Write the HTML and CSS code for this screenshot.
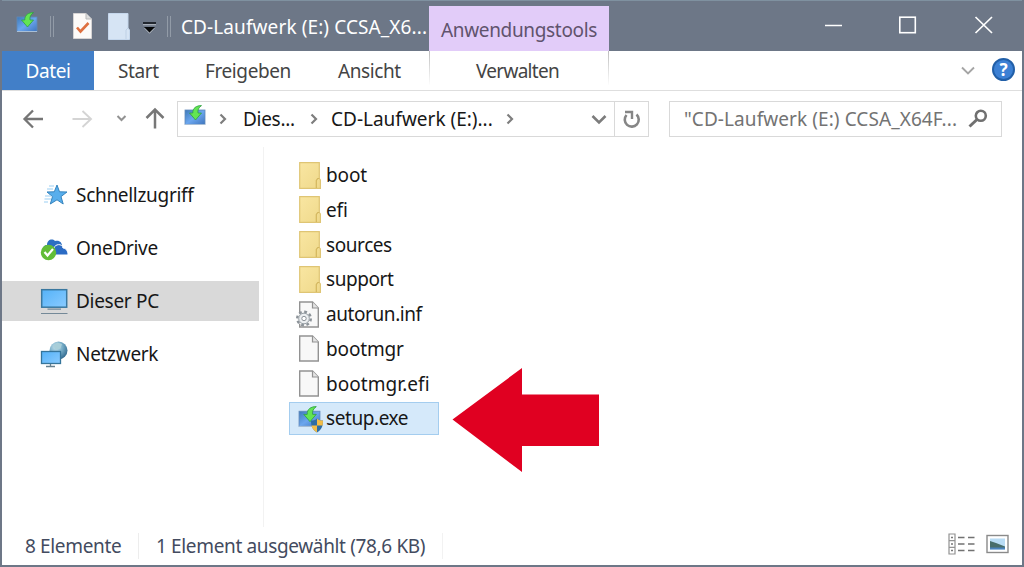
FILE: index.html
```html
<!DOCTYPE html>
<html lang="de">
<head>
  <meta charset="UTF-8">
  <title>CD-Laufwerk (E:)</title>
  <link rel="stylesheet" href="styles.css">
</head>
<body>
  <svg class="defs" width="0" height="0">
    <defs>
      <linearGradient id="blue" x1="0" y1="0" x2="1" y2="1">
        <stop offset="0" stop-color="#3d79b8"/>
        <stop offset="0.5" stop-color="#6ba6ee"/>
        <stop offset="1" stop-color="#3f75bd"/>
      </linearGradient>
      <linearGradient id="screen" x1="0" y1="0" x2="1" y2="1">
        <stop offset="0" stop-color="#54b2f8"/>
        <stop offset="1" stop-color="#8acbff"/>
      </linearGradient>
      <linearGradient id="fold" x1="0" y1="0" x2="1" y2="1">
        <stop offset="0" stop-color="#f9e6a2"/>
        <stop offset="1" stop-color="#efd98b"/>
      </linearGradient>
      <radialGradient id="globe" cx="0.35" cy="0.3" r="0.8">
        <stop offset="0" stop-color="#c6e3ee"/>
        <stop offset="0.5" stop-color="#72a9c5"/>
        <stop offset="1" stop-color="#275f86"/>
      </radialGradient>
      <symbol id="installer" viewBox="0 0 22 22">
        <rect x="1" y="5" width="20" height="14.5" fill="url(#blue)" stroke="#6089ba" stroke-width="0.8"/>
        <path d="M1 19.5H21" stroke="#a9bfd6" stroke-width="1"/>
        <path d="M17.5 0.6C12.5 0.5 8.500 3 8.800 8H5.500L11.5 15L17.500 8H14C13.5 5 14.5 2.8 17.5 0.6Z" fill="#63e552" stroke="#2f9e45" stroke-width="0.8"/>
      </symbol>
      <symbol id="folder" viewBox="0 0 22 27">
        <path d="M0.7 0.7H20.3V16.5L21.4 18V26.3H0.7Z" fill="url(#fold)" stroke="#dfc574" stroke-width="1.2"/>
        <path d="M17.3 26V18.5L18.8 16.5H20.3" fill="none" stroke="#d3b65e" stroke-width="1.2"/>
      </symbol>
      <symbol id="page" viewBox="0 0 22 27">
        <path d="M0.700 1H13.500L19.300 7V26H0.700Z" fill="#f8f8f8" stroke="#929292" stroke-width="1.4"/>
        <path d="M13.500 1V7H19.300" fill="#e4e4e4" stroke="#929292" stroke-width="1.2"/>
      </symbol>
    </defs>
  </svg>

  <div class="window">
    <div class="titlebar">
      <svg class="app-icon" width="22" height="22"><use href="#installer"/></svg>
      <span class="grip"></span>
      <svg class="props" width="19" height="26" viewBox="0 0 19 26">
        <path d="M0.5 0.5H13L18.5 6V25.5H0.5Z" fill="#fcfaf8" stroke="#d5d3d3"/>
        <path d="M13 0.5V6H18.5" fill="#ddd" stroke="#b9b9b9"/>
        <path d="M4 14.5L7.5 18.5L15.5 10" fill="none" stroke="#de7040" stroke-width="2.6"/>
      </svg>
      <svg class="newfolder" width="23" height="27" viewBox="0 0 23 27">
        <path d="M0.5 0.5H20V15L21.5 17V26.5H0.5Z" fill="#d6e4f4" stroke="#c5d7ec"/>
        <path d="M18 26V17L20 15" fill="none" stroke="#bed0e5"/>
      </svg>
      <svg class="more" width="13" height="12" viewBox="0 0 13 12">
        <path d="M0 1H13" stroke="#10141a" stroke-width="1.6"/>
        <path d="M0 2.7H13" stroke="#b7bdc5" stroke-width="1"/>
        <path d="M1 5H12L6.5 10.6Z" fill="#050607"/>
        <path d="M1.5 6.2L6.5 11.3L11.5 6.2" fill="none" stroke="#c6cad0" stroke-width="0.7"/>
      </svg>
      <span class="grip"></span>
      <span class="title">CD-Laufwerk (E:) CCSA_X6...</span>
      <span class="context">Anwendungstools</span>
      <svg class="controls" width="170" height="20" viewBox="0 0 170 20">
        <path d="M1 10.5H18" stroke="#fff" stroke-width="1.5"/>
        <rect x="75.8" y="2.2" width="15.5" height="15.5" fill="none" stroke="#fff" stroke-width="1.6"/>
        <path d="M151.5 2L168 18M168 2L151.5 18" stroke="#fff" stroke-width="1.7"/>
      </svg>
    </div>

    <div class="ribbon">
      <span class="tab file">Datei</span>
      <span class="tab start">Start</span>
      <span class="tab share">Freigeben</span>
      <span class="tab view">Ansicht</span>
      <span class="tab manage">Verwalten</span>
      <svg class="expand" width="14" height="9" viewBox="0 0 14 9"><path d="M1 1.5L7 7.5L13 1.5" fill="none" stroke="#a5a5a5" stroke-width="1.9"/></svg>
      <span class="help">?</span>
    </div>

    <div class="navbar">
      <svg class="arrows" width="145" height="24" viewBox="0 0 145 24">
        <path d="M21 12H2.5M11 3.5L2.5 12L11 20.5" fill="none" stroke="#757575" stroke-width="2.3"/>
        <path d="M50.5 12H69M60.5 4L69 12L60.5 20" fill="none" stroke="#d4d4d4" stroke-width="1.9"/>
        <path d="M95.5 9L99.500 13L103.500 9" fill="none" stroke="#929292" stroke-width="2"/>
        <path d="M133 21.5V3M124.5 11L133 2.5L141.5 11" fill="none" stroke="#777" stroke-width="2.5"/>
      </svg>
      <div class="address">
        <svg class="drive" width="22" height="22"><use href="#installer"/></svg>
        <svg class="chev c1" width="8" height="12" viewBox="0 0 8 12"><path d="M1.5 1.5L6 6L1.5 10.5" fill="none" stroke="#7e7e7e" stroke-width="2.2"/></svg>
        <span class="crumb pc">Dies...</span>
        <svg class="chev" width="8" height="12" viewBox="0 0 8 12"><path d="M1.5 1.5L6 6L1.5 10.5" fill="none" stroke="#7e7e7e" stroke-width="2.2"/></svg>
        <span class="crumb cd">CD-Laufwerk (E:)...</span>
        <svg class="chev" width="8" height="12" viewBox="0 0 8 12"><path d="M1.5 1.5L6 6L1.5 10.5" fill="none" stroke="#7e7e7e" stroke-width="2.2"/></svg>
        <svg class="drop" width="16" height="11" viewBox="0 0 16 11"><path d="M1.5 2L8 8.5L14.5 2" fill="none" stroke="#7c7c7c" stroke-width="2.6"/></svg>
        <span class="refresh">
          <svg width="18" height="19" viewBox="0 0 18 19">
            <path d="M3.500 5A7 7 0 1 0 13.5 4.500" fill="none" stroke="#868686" stroke-width="2.6"/>
            <path d="M2 2H9V9" fill="none" stroke="#868686" stroke-width="2.4"/>
          </svg>
        </span>
      </div>
      <div class="search">
        <span>"CD-Laufwerk (E:) CCSA_X64F...</span>
        <svg width="20" height="19" viewBox="0 0 20 19">
          <circle cx="12.8" cy="6.8" r="5" fill="none" stroke="#707070" stroke-width="2.6"/>
          <path d="M9 10.5L1.5 17.5" stroke="#707070" stroke-width="3"/>
        </svg>
      </div>
    </div>

    <div class="content">
      <div class="sidebar">
        <div class="place">
          <svg width="28" height="28" viewBox="0 0 28 28">
            <path d="M17 4L19.5 10.8L27 11L21 15.6L23.2 23L17 18.8L10.3 23L12.5 15.6L7 11L14.3 10.8Z" fill="#58aeec" stroke="#3684be"/>
            <path d="M9 5H14M7 8H13M5 15H11M4.500 18H11M4 21H8" stroke="#9bd0f4" stroke-width="1.2"/>
          </svg>
          <span>Schnellzugriff</span>
        </div>
        <div class="place">
          <svg width="28" height="28" viewBox="0 0 28 28">
            <path d="M6 18C2 17 2 11 7 11C7 6 12 4 15 7C20 6 22 9 22 12L17 18Z" fill="#2d6fc2"/>
            <path d="M10 21C9 16 11 14 14 14C15 10 22 9 23 14C26 14 28 17 28 21Z" fill="#2b6bc4" stroke="#fff" stroke-width="1"/>
            <circle cx="8.5" cy="18.5" r="7.7" fill="#62bd37"/>
            <path d="M4.5 18L7.5 21.5L13 15" fill="none" stroke="#fff" stroke-width="2.2"/>
          </svg>
          <span>OneDrive</span>
        </div>
        <div class="place active">
          <svg width="28" height="28" viewBox="0 0 28 28">
            <rect x="1.7" y="2.700" width="25" height="17.500" fill="url(#screen)" stroke="#3a789f" stroke-width="1.5"/>
            <path d="M7.5 22.2H21M1 26.500H27.500" stroke="#748998" stroke-width="1.2"/>
          </svg>
          <span>Dieser PC</span>
        </div>
        <div class="place">
          <svg width="28" height="28" viewBox="0 0 28 28">
            <circle cx="18.5" cy="10.5" r="9" fill="url(#globe)"/>
            <path d="M17 2.5L22 4L20.5 8.5L16 10L13 6Z" fill="#a8ced9"/>
            <rect x="1.500" y="11.500" width="19" height="12" fill="url(#screen)" stroke="#35759b" stroke-width="1.3"/>
            <path d="M6 26.500H15M10.5 24V26.500" stroke="#66808e" stroke-width="1.3"/>
          </svg>
          <span>Netzwerk</span>
        </div>
      </div>

      <div class="files">
        <div class="item"><svg width="22" height="27"><use href="#folder"/></svg><span>boot</span></div>
        <div class="item"><svg width="22" height="27"><use href="#folder"/></svg><span>efi</span></div>
        <div class="item"><svg width="22" height="27"><use href="#folder"/></svg><span class="tight">sources</span></div>
        <div class="item"><svg width="22" height="27"><use href="#folder"/></svg><span class="tight">support</span></div>
        <div class="item">
          <svg width="22" height="27" viewBox="0 0 22 27">
            <use href="#page" width="22" height="27"/>
            <circle cx="5" cy="17.5" r="6.8" fill="#f2f2f2" stroke="#8c9399" stroke-width="2.4" stroke-dasharray="2.8 2.540"/>
            <circle cx="5" cy="17.5" r="5.3" fill="#eceff1" stroke="#98a0a6" stroke-width="1"/>
            <circle cx="5" cy="17.5" r="2.2" fill="#fff" stroke="#8c9399" stroke-width="1"/>
          </svg>
          <span class="tight">autorun.inf</span>
        </div>
        <div class="item"><svg width="22" height="27"><use href="#page"/></svg><span>bootmgr</span></div>
        <div class="item"><svg width="22" height="27"><use href="#page"/></svg><span class="wide">bootmgr.efi</span></div>
        <div class="item selected">
          <svg width="22" height="27" viewBox="0 0 22 27">
            <use href="#installer" x="-1" y="1" width="23" height="23"/>
            <path d="M18 13.500C20 15.500 22 15.500 24 15.500C24 22 22 25 18 27.500C14 25 12 22 12 15.500C14 15.500 16 15.500 18 13.500Z" fill="#2d6da4"/>
            <path d="M18 13.500C20 15.500 22 15.500 24 15.500L23.700 20.500H18ZM18 20.500V27.500C15 25.500 13 23.500 12.500 20.500Z" fill="#f3bd46"/>
          </svg>
          <span class="tight">setup.exe</span>
          <svg class="pointer" width="148" height="106" viewBox="0 0 148 106"><path d="M0.5 52.5L70 1V27.500H147V79H70V105Z" fill="#e00021"/></svg>
        </div>
      </div>
    </div>

    <div class="statusbar">
      <span class="count">8 Elemente</span>
      <span class="chosen">1 Element ausgewählt (78,6 KB)</span>
      <svg class="views" width="61" height="22" viewBox="0 0 61 22">
        <path d="M1 1H7V21H1ZM1 7.7H7M1 14.3H7" fill="#fff" stroke="#929292" stroke-width="1.2"/>
        <path d="M3 4.5H5M3 11H5M3 17.5H5" stroke="#777" stroke-width="1.5"/>
        <path d="M10 4.5H16.5M20 4.5H26.5M10 11H16.5M20 11H26.5M10 17.5H16.5M20 17.5H26.5" stroke="#727272" stroke-width="1.5"/>
        <rect x="39" y="2.5" width="21" height="17" fill="#fff" stroke="#8a8a8a" stroke-width="1.4"/>
        <rect x="42" y="5.5" width="15" height="11" fill="#b8dcf5"/>
        <path d="M42 8L48 10L57 13.500V15H42Z" fill="#476d6b"/>
        <path d="M42 14.5H57V16.5H42Z" fill="#4a83bd"/>
      </svg>
    </div>
  </div>
</body>
</html>
```
FILE: styles.css
```css
* {
  box-sizing: border-box;
}

body {
  margin: 0;
  font-family: "Noto Sans", "Open Sans", sans-serif;
  font-size: 19px;
  color: #171717;
}

svg {
  flex: none;
  overflow: visible;
}

.defs {
  display: block;
}

.window {
  width: 1024px;
  height: 567px;
  display: flex;
  flex-direction: column;
  background: #fff;
  border: 2px solid #6d7787;
  border-top: 0;
  overflow: hidden;
  white-space: nowrap;
}

/* title bar */
.titlebar {
  height: 51px;
  flex: none;
  display: flex;
  align-items: center;
  background: #6d7787;
  border-top: 1px solid #7f91a0;
  color: #fff;
}

.app-icon {
  margin: 0 12px 6px 14px;
}

.grip {
  width: 4px;
  height: 21px;
  border: 1px solid #929ba7;
  border-width: 0 1px;
}

.props {
  margin-left: 19px;
}

.newfolder {
  margin-left: 16px;
}

.more {
  margin: 3px 11px 0 12px;
}

.title {
  width: 248px;
  margin: 1px 0 0 10px;
  letter-spacing: 0.1px;
}

.context {
  width: 180px;
  height: 45px;
  align-self: flex-end;
  line-height: 48px;
  text-align: center;
  background: #e2ccf9;
  color: #60536d;
  letter-spacing: -0.33px;
}

.controls {
  margin: 0 0 2px 215px;
}

/* ribbon tabs */
.ribbon {
  height: 40px;
  flex: none;
  display: flex;
  align-items: center;
  border-bottom: 1px solid #dedede;
  color: #444;
}

.tab {
  line-height: 40px;
  letter-spacing: -0.4px;
}

.file {
  width: 92px;
  height: 39px;
  background: #427fc8;
  color: #fff;
  text-align: center;
}

.start {
  margin-left: 24px;
  width: 87px;
}

.share {
  width: 133px;
}

.view {
  width: 91px;
}

.manage {
  width: 180px;
  height: 34px;
  padding-right: 3px;
  align-self: flex-start;
  text-align: center;
  letter-spacing: -0.7px;
  border: 1px solid;
  border-width: 0 1px;
  border-image: linear-gradient(#bbb, #fff) 1;
}

.expand {
  margin-left: 352px;
}

.help {
  width: 23px;
  height: 23px;
  margin: 0 0 2px 17px;
  border: 2px solid #215fa8;
  border-radius: 50%;
  background: #3c80d4;
  color: #fff;
  font-size: 17px;
  font-weight: bold;
  line-height: 19px;
  text-align: center;
}

/* address row */
.navbar {
  height: 56px;
  flex: none;
  display: flex;
  align-items: center;
  padding: 0 20px;
}

.arrows {
  margin-right: 10px;
}

.address {
  width: 472px;
  height: 36px;
  display: flex;
  align-items: center;
  border: 1px solid #d9d9d9;
  padding-left: 6px;
}

.drive {
  margin-bottom: 7px;
}

.c1 {
  margin-left: 13px;
}

.crumb {
  margin-bottom: 1px;
}

.pc {
  width: 67px;
  margin-left: 16px;
  letter-spacing: -0.3px;
}

.cd {
  width: 175px;
  margin-left: 13px;
}

.drop {
  margin-left: auto;
}

.refresh {
  width: 34px;
  height: 34px;
  margin-left: 7px;
  display: flex;
  align-items: center;
  justify-content: center;
  border-left: 1px solid #d9d9d9;
}

.search {
  width: 333px;
  height: 36px;
  margin-left: 20px;
  padding: 0 13px 1px 14px;
  display: flex;
  align-items: center;
  justify-content: space-between;
  border: 1px solid #d9d9d9;
  color: #737373;
  letter-spacing: 0.08px;
}

/* folder tree and file list */
.content {
  flex: 1;
  display: flex;
}

.sidebar {
  width: 262px;
  padding-top: 28px;
  border-right: 1px solid #f2f2f2;
}

.place {
  width: 257px;
  height: 40px;
  margin-bottom: 13px;
  padding-left: 38px;
  display: flex;
  align-items: center;
  gap: 8px;
  letter-spacing: -0.3px;
}

.active {
  background: #d9d9d9;
}

.files {
  padding: 11.5px 0 0 25px;
}

.item {
  position: relative;
  width: 150px;
  height: 33px;
  margin-bottom: 1.75px;
  padding-left: 9px;
  display: flex;
  align-items: center;
  gap: 5px;
  border: 1px solid transparent;
  letter-spacing: -0.15px;
}

.tight {
  letter-spacing: -0.42px;
}

.wide {
  letter-spacing: 0.05px;
}

.selected {
  background: #d5e9fa;
  border-color: #a4cdef;
}

.pointer {
  position: absolute;
  left: 162px;
  top: -36px;
}

/* status bar */
.statusbar {
  height: 38px;
  flex: none;
  display: flex;
  align-items: center;
  padding: 0 13px 0 23px;
  color: #434b60;
  letter-spacing: -0.35px;
}

.count {
  width: 114px;
  border-right: 1px solid #ededed;
}

.chosen {
  width: 304px;
  padding-left: 17px;
  border-right: 1px solid #f2f2f2;
}

.views {
  margin: 0 0 4px auto;
}
```
